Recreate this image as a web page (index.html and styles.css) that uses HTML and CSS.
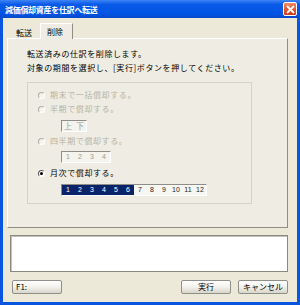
FILE: index.html
```html
<!DOCTYPE html>
<html lang="ja">
<head>
  <meta charset="UTF-8">
  <title>減価償却資産を仕訳へ転送</title>
  <link rel="stylesheet" href="styles.css">
</head>
<body>
  <div class="window">
    <div class="titlebar">
      <span class="title">減価償却資産を仕訳へ転送</span>
      <span class="close">
        <svg width="9" height="9" viewBox="0 0 9 9"><path d="M1 1L8 8M8 1L1 8" stroke="#fff" stroke-width="1.8"/></svg>
      </span>
    </div>

    <div class="client">
      <div class="tabs">
        <div class="tab">転送</div>
        <div class="tab active">削除</div>
      </div>

      <div class="panel">
        <p class="info">転送済みの仕訳を削除します。</p>
        <p class="info">対象の期間を選択し、[実行]ボタンを押してください。</p>

        <div class="group">
          <div class="radio disabled"><span class="dot"></span>期末で一括償却する。</div>
          <div class="radio disabled"><span class="dot"></span>半期で償却する。</div>
          <div class="cells disabled half">
            <span>上</span><span>下</span>
          </div>
          <div class="radio disabled r3"><span class="dot"></span>四半期で償却する。</div>
          <div class="cells disabled quarter">
            <span>1</span><span>2</span><span>3</span><span>4</span>
          </div>
          <div class="radio checked r4"><span class="dot"></span>月次で償却する。</div>
          <div class="cells months">
            <span class="sel">1</span><span class="sel">2</span><span class="sel">3</span>
            <span class="sel">4</span><span class="sel">5</span><span class="sel">6</span>
            <span>7</span><span>8</span><span>9</span>
            <span>10</span><span>11</span><span>12</span>
          </div>
        </div>
      </div>

      <div class="message"></div>

      <div class="buttons">
        <button class="btn f1">F1:</button>
        <span class="spacer"></span>
        <button class="btn">実行</button>
        <button class="btn">キャンセル</button>
      </div>
    </div>
  </div>
</body>
</html>
```

FILE: styles.css
```css
body {
  margin: 0;
  font-family: "Noto Sans CJK JP", "DejaVu Sans", sans-serif;
  font-size: 8px;
  color: #000;
}
.window {
  width: 300px;
  height: 305px;
  background: #0a55e0;
  display: flex;
  flex-direction: column;
}
.titlebar {
  height: 18px;
  background: linear-gradient(#3d84f5, #0a5ae8 25%, #0054e3 80%, #0a48c8);
  display: flex;
  align-items: center;
  padding: 0 3px 0 5px;
}
.title {
  color: #fff;
  font-weight: bold;
  font-size: 8px;
  letter-spacing: -0.3px;
  flex: 1;
}
.close {
  width: 12px;
  height: 12px;
  background: linear-gradient(#f08a6a, #e0502a 60%, #c83a18);
  border: 1px solid #fff;
  border-radius: 2px;
  display: flex;
  align-items: center;
  justify-content: center;
}
.client {
  flex: 1;
  margin: 0 3px 3px 3px;
  background: #ece9d8;
  padding: 5px 9px 0 4px;
}
.tabs {
  height: 15px;
  display: flex;
  align-items: flex-end;
  padding-left: 2px;
}
.tab {
  height: 12px;
  width: 31px;
  box-sizing: border-box;
  padding-left: 6px;
  line-height: 11px;
  border: 1px solid transparent;
  border-bottom: none;
}
.tab.active {
  height: 16px;
  width: 33px;
  padding-left: 6px;
  line-height: 15px;
  background: #efede3;
  border-color: #fff #8f8d84 #8f8d84 #fff;
  margin-bottom: -1px;
  z-index: 1;
}
.panel {
  height: 190px;
  box-sizing: border-box;
  border: 1px solid;
  border-color: #fff #8f8d84 #8f8d84 #fff;
  background: #efede3;
  padding: 8px 0 0 19px;
}
.info {
  margin: 0;
  height: 14px;
  line-height: 14px;
  letter-spacing: 0.6px;
}
.group {
  margin-top: 7px;
  width: 225px;
  height: 122px;
  box-sizing: border-box;
  border: 1px solid #d6d3c4;
  padding: 5px 0 0 10px;
}
.radio {
  height: 14px;
  line-height: 14px;
  display: flex;
  align-items: center;
  gap: 5px;
  letter-spacing: 0.6px;
}
.radio.disabled {
  color: #b5b2a4;
}
.dot {
  width: 7px;
  height: 7px;
  box-sizing: border-box;
  border-radius: 50%;
  border: 1px solid #b0ad9e;
  border-right-color: #fff;
  border-bottom-color: #fff;
  background: #f4f3ee;
  display: flex;
  align-items: center;
  justify-content: center;
}
.radio.checked .dot {
  border-color: #555 #fff #fff #555;
  background: #fff;
}
.radio.checked .dot::after {
  content: "";
  width: 3px;
  height: 3px;
  border-radius: 50%;
  background: #000;
}
.r3 {
  margin-top: 2px;
}
.r4 {
  margin-top: 3px;
}
.cells {
  margin-left: 23px;
  display: flex;
  height: 12px;
  box-sizing: border-box;
  width: max-content;
  border: 1px solid;
  border-color: #8e8e86 #fff #fff #8e8e86;
  background: #f4f3ee;
}
.cells span {
  width: 12px;
  text-align: center;
  line-height: 10px;
  font-family: "Liberation Sans", sans-serif;
  font-size: 7px;
}
.cells.half {
  margin-top: 4px;
}
.cells.half span {
  font-family: "Noto Sans CJK JP", sans-serif;
  font-size: 8px;
}
.cells.quarter {
  margin-top: 3px;
}
.cells.disabled {
  color: #9e9b8e;
}
.cells.months {
  margin-top: 4px;
  background: #f6f6f2;
}
.months span {
  color: #222;
}
.months .sel {
  background: #0a246a;
  color: #fff;
}
.message {
  margin: 7px 0 0 3px;
  height: 37px;
  box-sizing: border-box;
  background: #fff;
  border: 1px solid #8b8a82;
  box-shadow: inset 1px 1px #c6c3b6;
}
.buttons {
  display: flex;
  margin-top: 8px;
  padding-left: 5px;
  gap: 7px;
}
.spacer {
  flex: 1;
}
.btn {
  width: 50px;
  height: 14px;
  padding: 0;
  font-family: "Noto Sans CJK JP", sans-serif;
  font-size: 8px;
  line-height: 12px;
  color: #000;
  border: 1px solid #8f8f8a;
  border-radius: 2px;
  background: linear-gradient(#ffffff, #f2f1ec 50%, #d8d5cb);
}
.btn.f1 {
  text-align: left;
  padding-left: 3px;
}
```
